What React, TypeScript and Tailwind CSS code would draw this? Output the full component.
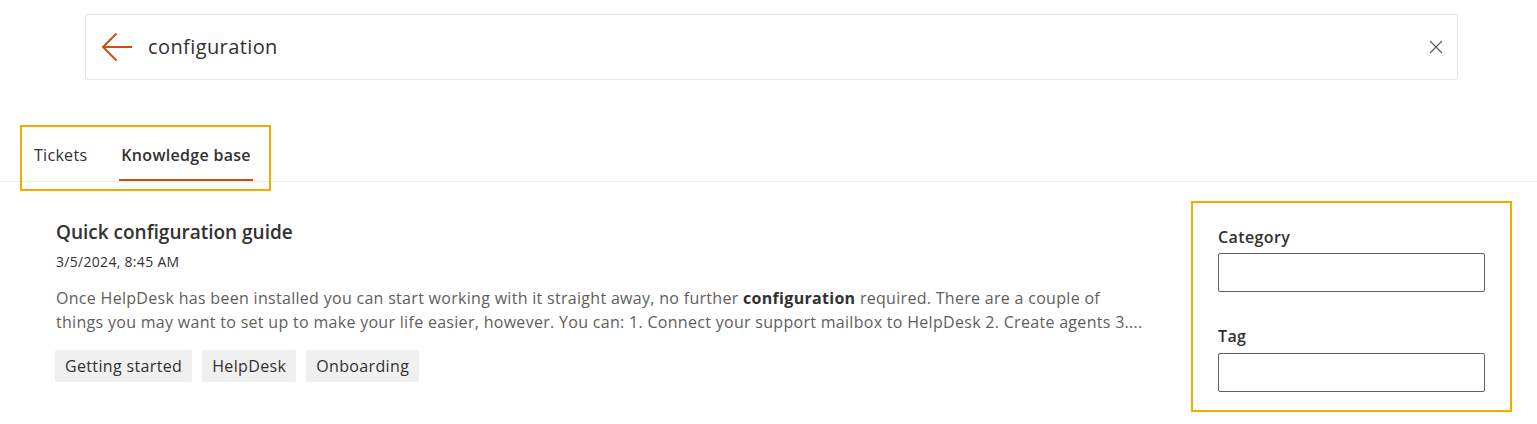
import { X } from "lucide-react";

const tags = ["Getting started", "HelpDesk", "Onboarding"];

function BackArrow() {
  return (
    <svg width="32" height="30" viewBox="0 0 32 30" fill="none" className="shrink-0">
      <path d="M2 15H31" stroke="#ca5010" strokeWidth="2" />
      <path d="M15.5 1.5L2 15L15.5 28.5" stroke="#ca5010" strokeWidth="2" />
    </svg>
  );
}

export default function App() {
  return (
    <div className="h-[424px] w-full overflow-hidden bg-white font-['Open_Sans',sans-serif] text-[#323130]">
      <div className="pt-[14px]">
        <div className="ml-[85px] flex h-[66px] w-[1373px] items-center rounded-[2px] border border-[#e6e6e6] pl-[15px] pr-[10px]">
          <BackArrow />
          <span className="ml-[15px] flex-1 text-[20px] tracking-[0.4px]">configuration</span>
          <X size={22} strokeWidth={1.3} className="text-[#605e5c]" />
        </div>
      </div>

      <div className="mt-[45px] h-[57px] border-b border-[#ededed]">
        <div className="relative z-10 ml-[20px] flex h-[66px] w-[251px] border-2 border-[#f5aa00] pl-[12px] pr-[16px] text-[16px] tracking-[0.3px]">
          <div className="flex h-[54px] items-center border-b-2 border-transparent pt-[3px]">Tickets</div>
          <div className="ml-[32px] flex h-[54px] items-center border-b-2 border-[#ca5010] px-[2px] pt-[3px] font-semibold">
            Knowledge base
          </div>
        </div>
      </div>

      <div className="flex pt-[19px]">
        <div className="flex-1 pl-[56px] pt-[18px]">
          <h2 className="text-[19px] font-semibold leading-[26px]">Quick configuration guide</h2>
          <div className="mt-[8px] text-[14px] leading-[18px] tracking-[0.3px]">3/5/2024, 8:45 AM</div>
          <div className="mt-[15px] text-[16px] leading-[24px] tracking-[0.3px] whitespace-nowrap text-[#605e5c]">
            <span className="block">
              Once HelpDesk has been installed you can start working with it straight away, no further{" "}
              <b className="font-bold text-[#323130]">configuration</b> required. There are a couple of
            </span>
            <span className="block">
              things you may want to set up to make your life easier, however. You can: 1. Connect your support mailbox
              to HelpDesk 2. Create agents 3....
            </span>
          </div>
          <div className="-ml-px mt-[16px] flex gap-[10px]">
            {tags.map((tag) => (
              <span
                key={tag}
                className="flex h-[32px] items-center rounded-[2px] bg-[#f0f0f0] px-[10px] text-[16px] tracking-[0.35px]"
              >
                {tag}
              </span>
            ))}
          </div>
        </div>

        <div className="mr-[25px] h-[211px] w-[321px] border-2 border-[#f5aa00] px-[25px] pt-[23px]">
          <label className="block text-[16px] font-semibold leading-[22px] tracking-[0.4px]">Category</label>
          <div className="mt-[5px] h-[39px] rounded-[2px] border border-[#605e5c]" />
          <label className="mt-[33px] block text-[16px] font-semibold leading-[22px] tracking-[0.4px]">Tag</label>
          <div className="mt-[6px] h-[39px] rounded-[2px] border border-[#605e5c]" />
        </div>
      </div>
    </div>
  );
}
